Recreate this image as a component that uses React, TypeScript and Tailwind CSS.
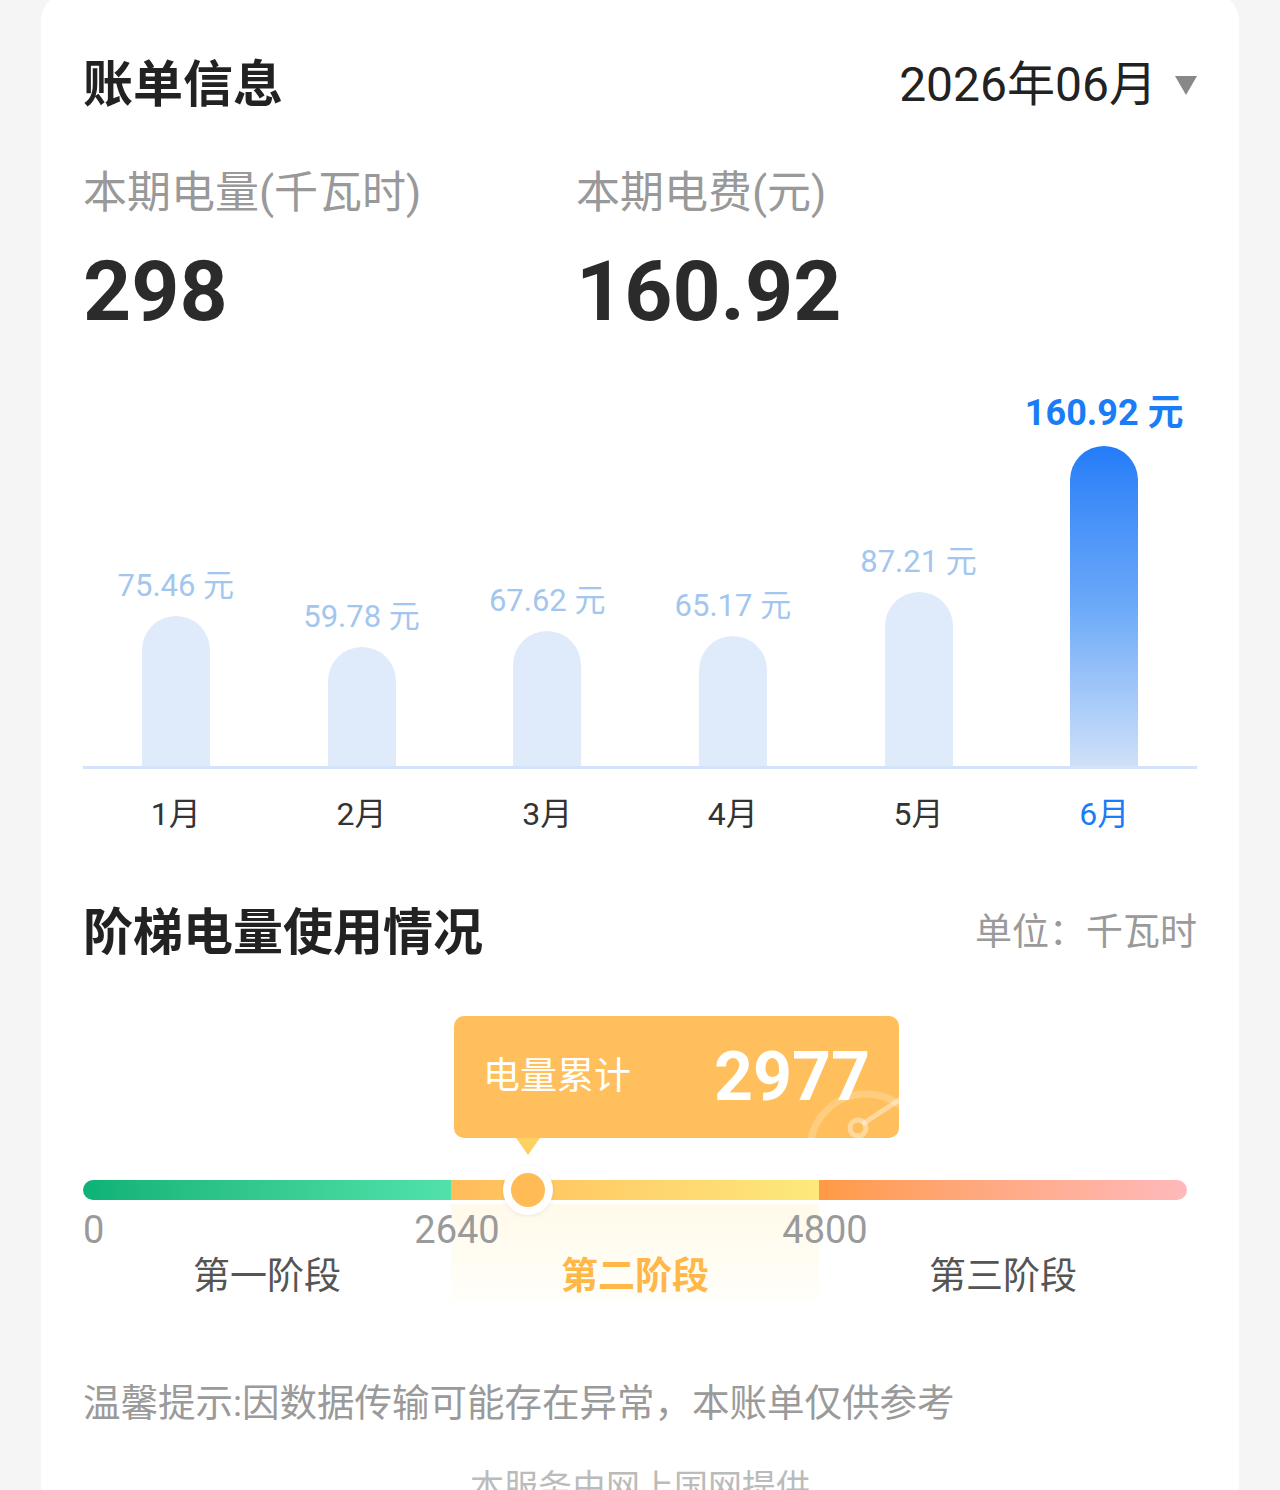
import React from "react";

const bills = [
  { month: "1月", amount: 75.46 },
  { month: "2月", amount: 59.78 },
  { month: "3月", amount: 67.62 },
  { month: "4月", amount: 65.17 },
  { month: "5月", amount: 87.21 },
  { month: "6月", amount: 160.92 },
];

const font = "font-['Roboto','Noto_Sans_CJK_SC',sans-serif]";

function BarChart() {
  return (
    <div className="mt-[2px]">
      <div className="flex h-[425px] items-end border-b-[3px] border-[#d3e4fa]">
        {bills.map((b, i) => {
          const active = i === bills.length - 1;
          return (
            <div key={b.month} className="flex flex-1 flex-col items-center justify-end">
              <div
                className={
                  active
                    ? "mb-[13px] h-[40px] text-[36px] font-bold leading-[40px] text-[#1a7cf6]"
                    : "mb-[10px] h-[40px] text-[31px] leading-[40px] text-[#a3c6ef]"
                }
              >
                {b.amount.toFixed(2)} 元
              </div>
              <div
                className={
                  active
                    ? "w-[68px] rounded-t-full bg-gradient-to-b from-[#237cf8] via-[#6ba9f8] to-[#cfe0f8]"
                    : "w-[68px] rounded-t-full bg-[#dfebfa]"
                }
                style={{ height: Math.round(b.amount * 1.99) }}
              />
            </div>
          );
        })}
      </div>
      <div className="flex h-[90px] items-center">
        {bills.map((b, i) => (
          <div
            key={b.month}
            className={
              i === bills.length - 1
                ? "flex-1 text-center text-[32px] text-[#1a7cf6]"
                : "flex-1 text-center text-[32px] text-[#333]"
            }
          >
            {b.month}
          </div>
        ))}
      </div>
    </div>
  );
}

function Tooltip() {
  return (
    <div className="absolute left-[371px] top-[48px] w-[445px]">
      <div className="relative flex h-[122px] items-center justify-between overflow-hidden rounded-[10px] bg-[#ffbf5d] pl-[29px] pr-[29px]">
        <span className="text-[37px] text-white">电量累计</span>
        <span className="text-[68px] font-bold leading-none text-white">2977</span>
        <svg
          className="absolute left-[345px] top-[72px]"
          width="100"
          height="50"
          viewBox="0 0 100 50"
          fill="none"
        >
          <circle cx="67" cy="62" r="56" stroke="white" strokeOpacity="0.22" strokeWidth="7" />
          <circle cx="59" cy="40" r="8" stroke="white" strokeOpacity="0.4" strokeWidth="5" />
          <path d="M65 35 L100 12" stroke="white" strokeOpacity="0.4" strokeWidth="5" strokeLinecap="round" />
        </svg>
      </div>
      <div className="ml-[62px] h-0 w-0 border-x-[12px] border-t-[17px] border-x-transparent border-t-[#fdd064]" />
    </div>
  );
}

function LadderBar() {
  return (
    <div className="relative pt-[212px]">
      <Tooltip />
      <div className="relative mr-[10px]">
        <div className="flex h-[20px] overflow-hidden rounded-full">
          <div className="flex-1 bg-gradient-to-r from-[#0cb276] to-[#50e2aa]" />
          <div className="flex-1 bg-gradient-to-r from-[#ffbc5a] to-[#fde97c]" />
          <div className="flex-1 bg-gradient-to-r from-[#ff9a44] to-[#ffb9bb]" />
        </div>
        <div className="absolute left-[420px] top-[-15px] h-[50px] w-[50px] rounded-full border-[8px] border-white bg-[#ffbb55] shadow-[0_1px_4px_rgba(0,0,0,0.08)]" />
      </div>
      <div className="mr-[10px] grid grid-cols-3 pt-[4px]">
        <div className="flex flex-col">
          <div className="h-[52px] text-[38px] leading-[52px] text-[#9a9a9a]">0</div>
          <div className="h-[42px] text-center text-[37px] leading-[42px] text-[#555]">第一阶段</div>
        </div>
        <div className="flex flex-col bg-gradient-to-b from-[#fffaea] to-[#fffefa] pb-[4px]">
          <div className="h-[52px] text-[38px] leading-[52px] text-[#9a9a9a]">
            <span className="ml-[6px] inline-block -translate-x-1/2">2640</span>
          </div>
          <div className="h-[42px] text-center text-[37px] font-bold leading-[42px] text-[#ffb748]">第二阶段</div>
        </div>
        <div className="flex flex-col">
          <div className="h-[52px] text-[38px] leading-[52px] text-[#9a9a9a]">
            <span className="ml-[6px] inline-block -translate-x-1/2">4800</span>
          </div>
          <div className="h-[42px] text-center text-[37px] leading-[42px] text-[#555]">第三阶段</div>
        </div>
      </div>
    </div>
  );
}

export default function App() {
  return (
    <div className={`h-[1490px] overflow-hidden bg-[#f5f5f5] px-[41px] ${font}`}>
      <div className="-mt-[6px] rounded-t-[26px] bg-white px-[42px] pb-[60px] pt-[56px]">
        <div className="flex h-[70px] items-center justify-between">
          <h1 className="text-[50px] font-bold text-[#222]">账单信息</h1>
          <div className="flex items-center">
            <span className="text-[48px] text-[#222]">2026年06月</span>
            <span className="ml-[18px] h-0 w-0 border-x-[11px] border-t-[19px] border-x-transparent border-t-[#888]" />
          </div>
        </div>

        <div className="mt-[43px] grid grid-cols-[493px_1fr]">
          <div>
            <div className="h-[60px] text-[44px] leading-[60px] text-[#999]">本期电量(千瓦时)</div>
            <div className="mt-[19px] h-[100px] text-[84px] font-bold leading-[100px] text-[#2b2b2b]">298</div>
          </div>
          <div>
            <div className="h-[60px] text-[44px] leading-[60px] text-[#999]">本期电费(元)</div>
            <div className="mt-[19px] h-[100px] text-[84px] font-bold leading-[100px] text-[#2b2b2b]">160.92</div>
          </div>
        </div>

        <BarChart />

        <div className="mt-[39px] flex h-[70px] items-center justify-between">
          <h2 className="text-[50px] font-bold text-[#222]">阶梯电量使用情况</h2>
          <span className="text-[37px] text-[#9a9a9a]">单位：千瓦时</span>
        </div>

        <LadderBar />

        <div className="mt-[71px] h-[60px] text-[37.5px] leading-[60px] text-[#9a9a9a]">
          温馨提示:因数据传输可能存在异常，本账单仅供参考
        </div>
        <div className="mt-[29px] h-[50px] text-center text-[34px] leading-[50px] text-[#bbb]">
          本服务由网上国网提供
        </div>
      </div>
    </div>
  );
}
